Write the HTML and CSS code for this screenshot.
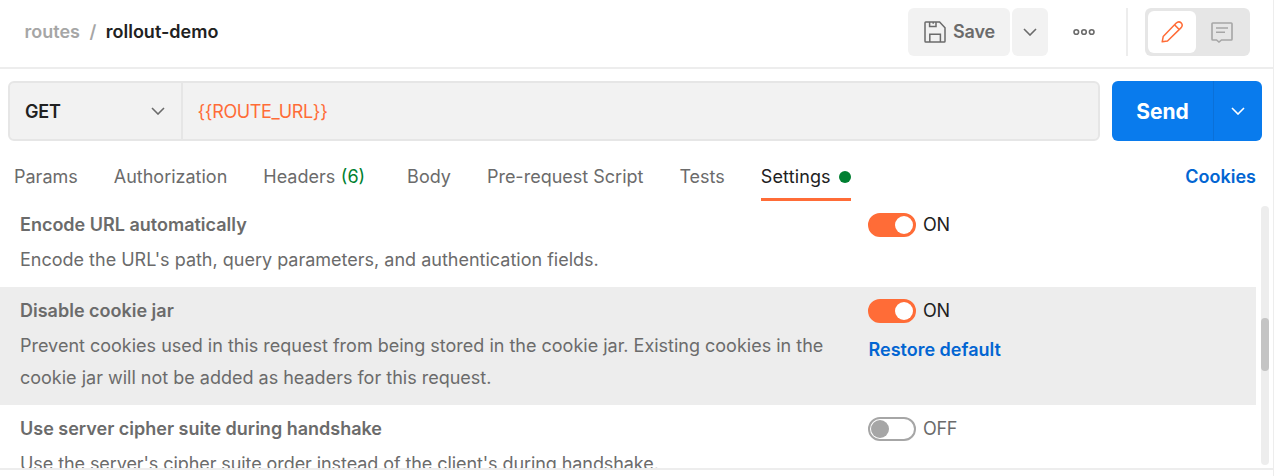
FILE: index.html
```html
<!DOCTYPE html>
<html lang="en">
<head>
<meta charset="utf-8">
<title>rollout-demo</title>
<link rel="stylesheet" href="styles.css">
</head>
<body>
<main class="panel">
  <header class="header">
    <nav class="crumbs"><span class="crumb-parent">routes</span><span class="crumb-sep">/</span><span class="crumb-current">rollout-demo</span></nav>
    <div class="actions">
      <button class="btn save"><svg width="22" height="22" viewBox="0 0 22 22" fill="none" stroke="#6b6b6b" stroke-width="1.5"><path d="M1.8 1H15.6L21 6.7V20.2Q21 21 20.2 21H1.8Q1 21 1 20.2V1.8Q1 1 1.8 1Z"/><path d="M5.6 1V5.6H12V1M9.2 1V2.8M5.8 21V13.3H16.4V21"/></svg><span class="save-label">Save</span></button>
      <button class="btn save-menu"><svg width="14" height="8" viewBox="0 0 14 8" fill="none" stroke="#6b6b6b" stroke-width="1.6"><path d="M1 1L7 7L13 1"/></svg></button>
      <svg class="more" width="22" height="8" viewBox="0 0 22 8" fill="none" stroke="#6b6b6b" stroke-width="1.6"><circle cx="3.3" cy="4" r="2.3"/><circle cx="11" cy="4" r="2.3"/><circle cx="18.7" cy="4" r="2.3"/></svg>
      <span class="divider"></span>
      <div class="modes">
        <span class="mode mode-active"><svg width="22" height="22" viewBox="0 0 22 22" fill="none" stroke="#ff6c37" stroke-width="1.5" stroke-linejoin="round"><path d="M1.2 20.8L2.2 15.6L15 2.3C16.7 .6 18.9 .7 20.2 1.9C21.4 3.2 21.4 5.4 19.7 7.1L6.5 20Z"/><path d="M13.6 3.9L18.2 8.5"/></svg></span>
        <span class="mode mode-comment"><svg width="22" height="21" viewBox="0 0 22 21" fill="none" stroke="#a6a6a6" stroke-width="1.6"><path d="M1.8 1H20.2Q21 1 21 1.8V17.2Q21 18 20.2 18H10.5L8 20L5.5 18H1.8Q1 18 1 17.2V1.8Q1 1 1.8 1ZM5 6H17M5 10.3H14"/></svg></span>
      </div>
    </div>
  </header>

  <section class="request">
    <div class="url-box">
      <div class="method"><span>GET</span><svg width="14" height="8" viewBox="0 0 14 8" fill="none" stroke="#6b6b6b" stroke-width="1.6"><path d="M1 1L7 7L13 1"/></svg></div>
      <div class="url">{{ROUTE_URL}}</div>
    </div>
    <div class="send">
      <span class="send-label">Send</span>
      <span class="send-menu"><svg width="14" height="8" viewBox="0 0 14 8" fill="none" stroke="#fff" stroke-width="1.6"><path d="M1 1L7 7L13 1"/></svg></span>
    </div>
  </section>

  <nav class="tabs">
    <span class="tab">Params</span>
    <span class="tab">Authorization</span>
    <span class="tab tab-headers">Headers <span class="count">(6)</span></span>
    <span class="tab">Body</span>
    <span class="tab">Pre-request Script</span>
    <span class="tab">Tests</span>
    <span class="tab tab-active">Settings<i class="dot"></i></span>
    <a class="link cookies">Cookies</a>
  </nav>

  <section class="settings">
    <div class="list">
      <article class="row">
        <div class="info"><h3 class="name">Encode URL automatically</h3><p class="desc">Encode the URL's path, query parameters, and authentication fields.</p></div>
        <div class="control"><div class="switch-line"><i class="switch switch-on"></i><span class="state state-on">ON</span></div></div>
      </article>
      <article class="row row-hover">
        <div class="info"><h3 class="name">Disable cookie jar</h3><p class="desc">Prevent cookies used in this request from being stored in the cookie jar. Existing cookies in the<br>cookie jar will not be added as headers for this request.</p></div>
        <div class="control"><div class="switch-line"><i class="switch switch-on"></i><span class="state state-on">ON</span></div><a class="link restore">Restore default</a></div>
      </article>
      <article class="row">
        <div class="info"><h3 class="name">Use server cipher suite during handshake</h3><p class="desc desc-tight">Use the server's cipher suite order instead of the client's during handshake.</p></div>
        <div class="control"><div class="switch-line"><i class="switch"></i><span class="state">OFF</span></div></div>
      </article>
    </div>
    <div class="scrollbar"><div class="thumb"></div></div>
  </section>
</main>
</body>
</html>
```
FILE: styles.css
```css
* { box-sizing: border-box; }
body { margin: 0; background: #fff; color: #6b6b6b; font-family: Inter, sans-serif; font-size: 18px; overflow: hidden; }
svg { display: block; flex: none; }
.panel { width: 1274px; height: 476px; border-right: 1px solid #ededed; }

.header { display: flex; justify-content: space-between; height: 69px; padding: 8px 23px 0 24.5px; border-bottom: 2px solid #ededed; }
.crumbs { display: flex; height: 46px; align-items: center; font-weight: 600; }
.crumb-parent, .crumb-sep { color: #a6a6a6; }
.crumb-sep { margin: 0 9.5px; }
.crumb-current { color: #212121; }
.actions { display: flex; height: 48px; align-items: center; }
.btn { display: flex; align-items: center; justify-content: center; height: 48px; padding: 0; border: 0; border-radius: 6px; background: #f2f2f2; color: #6b6b6b; font: 600 18px Inter, sans-serif; }
.save { width: 102px; gap: 7px; margin-right: 2px; padding-left: 1px; letter-spacing: -0.1px; }
.save-label { padding-bottom: 1px; }
.save-menu { width: 36px; }
.more { margin-left: 25px; }
.divider { width: 2px; height: 48px; margin: 0 17px 0 31px; background: #ededed; }
.modes { display: flex; width: 105px; height: 48px; padding: 3px; border-radius: 6px; background: #e6e6e6; }
.mode { display: flex; align-items: center; justify-content: center; width: 52px; height: 42px; }
.mode-active { width: 48px; border-radius: 6px; background: #fff; }
.mode-comment { padding-left: 1px; }

.request { display: flex; gap: 12px; padding: 12px 11px 0 8px; }
.url-box { display: flex; width: 1092px; height: 60px; border: 2px solid #e6e6e6; border-radius: 6px; background: #f2f2f2; }
.method { display: flex; align-items: center; justify-content: space-between; width: 173px; padding: 0 16px 0 15px; border-right: 2px solid #e6e6e6; color: #212121; font-weight: 600; letter-spacing: -0.2px; }
.url { display: flex; align-items: center; padding-left: 14.5px; color: #ff6c37; letter-spacing: -0.35px; }
.send { display: flex; width: 150px; height: 60px; border-radius: 6px; background: #097bed; color: #fff; }
.send-label { display: flex; align-items: center; justify-content: center; width: 101px; font-size: 21px; font-weight: 700; }
.send-menu { display: flex; align-items: center; justify-content: center; width: 49px; border-left: 1px solid #0a70d8; }

.tabs { display: flex; gap: 36px; height: 60px; padding: 0 17px 0 14px; line-height: 24px; }
.tab { height: 60px; padding-top: 24px; white-space: nowrap; }
.tab-headers { margin-right: 6px; }
.count { margin-left: 0.5px; color: #007f31; }
.tab-active { display: flex; border-bottom: 3px solid #ff6c37; color: #212121; letter-spacing: 0.12px; }
.dot { width: 12px; height: 12px; margin: 6px 0 0 8px; border-radius: 50%; background: #007f31; }
.link { color: #0265d2; font-weight: 600; }
.cookies { margin-left: auto; padding-top: 24px; }

.settings { display: flex; justify-content: space-between; height: 269px; padding-right: 4px; border-bottom: 2px solid #ededed; overflow: hidden; }
.list { width: 1256px; overflow: hidden; }
.row { display: flex; padding: 8px 0 11px 20px; }
.row-hover { background: #ededed; }
.info { width: 848px; }
.name { margin: 0 0 3px; font-size: 18px; font-weight: 600; line-height: 32px; }
.desc { margin: 0; line-height: 32px; white-space: nowrap; }
.desc-tight { letter-spacing: -0.08px; }
.switch-line { display: flex; align-items: center; gap: 7px; height: 32px; letter-spacing: -0.3px; }
.state { line-height: 32px; }
.switch { display: flex; align-items: center; width: 48px; height: 24px; padding: 0 1px; border: 2px solid #a6a6a6; border-radius: 12px; }
.switch::before { content: ""; width: 18px; height: 18px; border-radius: 50%; background: #a6a6a6; }
.switch-on { justify-content: flex-end; border-color: #ff6c37; background: #ff6c37; }
.switch-on::before { background: #fff; }
.state-on { color: #212121; }
.restore { display: block; margin: 7px 0 0 0.5px; line-height: 32px; }
.scrollbar { width: 8px; height: 259px; margin-top: 5px; padding-top: 112px; border-radius: 4px; background: #ededed; }
.thumb { height: 53px; border-radius: 4px; background: #c4c4c4; }
```
